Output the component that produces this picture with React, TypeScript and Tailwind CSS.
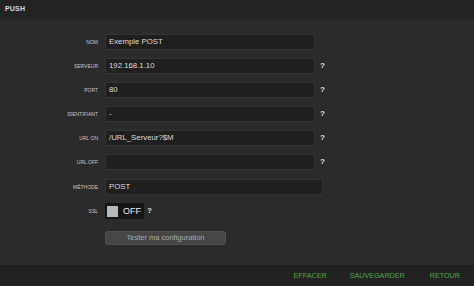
import React from "react";

const rows: { label: string; value: string; help: boolean; wide?: boolean }[] = [
  { label: "NOM", value: "Exemple POST", help: false },
  { label: "SERVEUR", value: "192.168.1.10", help: true },
  { label: "PORT", value: "80", help: true },
  { label: "IDENTIFIANT", value: "-", help: true },
  { label: "URL ON", value: "/URL_Serveur?$M", help: true },
  { label: "URL OFF", value: "", help: true },
  { label: "MÉTHODE", value: "POST", help: false, wide: true },
];

export default function App() {
  return (
    <div
      className="w-[474px] h-[286px] flex flex-col bg-[#2b2b2b] overflow-hidden"
      style={{ fontFamily: '"Liberation Sans", Arial, sans-serif' }}
    >
      <div className="h-[20px] bg-[#232323] border-b border-[#262626] flex items-center pl-[5px]">
        <span className="text-[7px] font-bold text-[#dcdcdc] tracking-[0.2px]">PUSH</span>
      </div>
      <div className="flex-1 flex flex-col pt-[14px]">
        <div className="flex flex-col gap-[8px]">
          {rows.map((r) => (
            <div key={r.label} className={(r.wide ? "mt-[1px] " : "") + "flex items-center h-[16px]"}>
              <div className="w-[98px] text-right text-[5px] text-[#c8c8c8] leading-none">{r.label}</div>
              <div
                className={
                  (r.wide ? "w-[218px]" : "w-[210px]") +
                  " ml-[7px] h-[16px] bg-[#1f1f1f] border border-[#343434] flex items-center pl-[3px] text-[7.8px] text-[#dedede] leading-none"
                }
              >
                {r.value}
              </div>
              {r.help && <span className="ml-[5px] text-[8px] font-bold text-[#e0e0e0] leading-none">?</span>}
            </div>
          ))}
        </div>
        <div className="flex items-center h-[16px] mt-[8px]">
          <div className="w-[98px] text-right text-[5px] text-[#c8c8c8] leading-none">SSL</div>
          <div className="ml-[7px] w-[39px] h-[16px] bg-[#161616] flex items-center pl-[2px]">
            <div className="w-[11px] h-[11px] bg-[#b9b9b9]" />
            <span className="ml-[5px] text-[9px] text-[#ececec] leading-none">OFF</span>
          </div>
          <span className="ml-[3px] text-[8px] font-bold text-[#e0e0e0] leading-none">?</span>
        </div>
        <div className="flex mt-[12px] pl-[105px]">
          <div className="w-[121px] h-[14px] rounded-[3px] bg-[#464646] border border-[#505050] flex items-center justify-center text-[7.5px] text-[#a8a8a8] leading-none">
            Tester ma configuration
          </div>
        </div>
      </div>
      <div className="h-[21px] bg-[#222222] border-t border-[#1e1e1e] flex items-center justify-end pr-[14px] text-[7.2px] text-[#4fa84a] leading-none">
        <span>EFFACER</span>
        <span className="ml-[23px]">SAUVEGARDER</span>
        <span className="ml-[25px]">RETOUR</span>
      </div>
    </div>
  );
}
